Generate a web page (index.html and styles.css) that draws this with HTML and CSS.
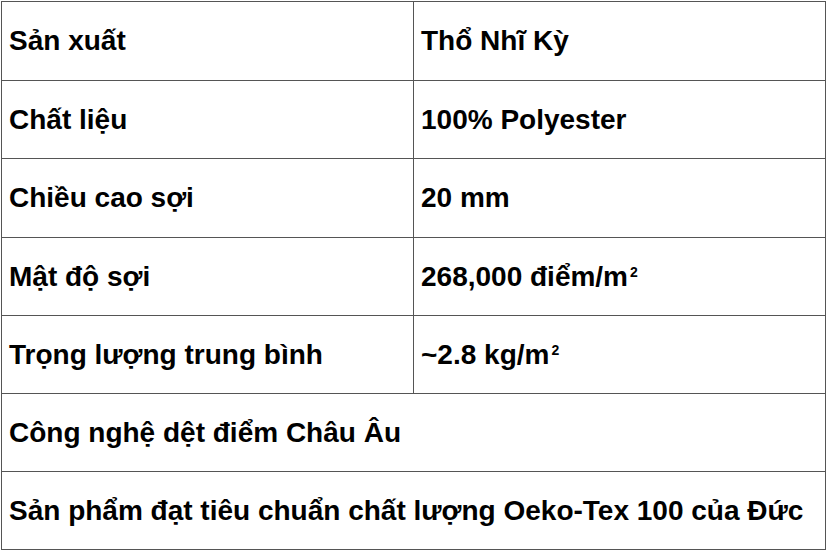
FILE: index.html
```html
<!DOCTYPE html>
<html lang="vi">
<head>
<meta charset="utf-8">
<link rel="stylesheet" href="styles.css">
</head>
<body>
<div class="spec">
  <div class="cell"><span>Sản xuất</span></div>
  <div class="cell"><span>Thổ Nhĩ Kỳ</span></div>
  <div class="cell"><span>Chất liệu</span></div>
  <div class="cell"><span>100% Polyester</span></div>
  <div class="cell"><span>Chiều cao sợi</span></div>
  <div class="cell"><span>20 mm</span></div>
  <div class="cell"><span>Mật độ sợi</span></div>
  <div class="cell"><span>268,000 điểm/m<sup>2</sup></span></div>
  <div class="cell"><span>Trọng lượng trung bình</span></div>
  <div class="cell"><span>~2.8 kg/m<sup>2</sup></span></div>
  <div class="cell wide"><span>Công nghệ dệt điểm Châu Âu</span></div>
  <div class="cell wide"><span>Sản phẩm đạt tiêu chuẩn chất lượng Oeko-Tex 100 của Đức</span></div>
</div>
</body>
</html>
```
FILE: styles.css
```css
html, body {
  margin: 0;
  padding: 0;
  background: #fff;
}
.spec {
  margin: 1px 0 0 1px;
  display: grid;
  grid-template-columns: 412px 412px;
  grid-template-rows: 79px 78px 79px 78px 78px 78px 78px;
  width: 824px;
  border-top: 1px solid #555;
  border-left: 1px solid #555;
  font-family: "Liberation Sans", Arial, sans-serif;
  font-weight: bold;
  font-size: 28px;
  color: #000;
}
.cell {
  border-right: 1px solid #555;
  border-bottom: 1px solid #555;
  display: flex;
  align-items: center;
  padding: 0 0 0 7px;
  white-space: nowrap;
}
.wide {
  grid-column: 1 / 3;
}
sup {
  font-size: 14px;
  line-height: 0;
  vertical-align: 9px;
  margin-left: 2px;
}
```
